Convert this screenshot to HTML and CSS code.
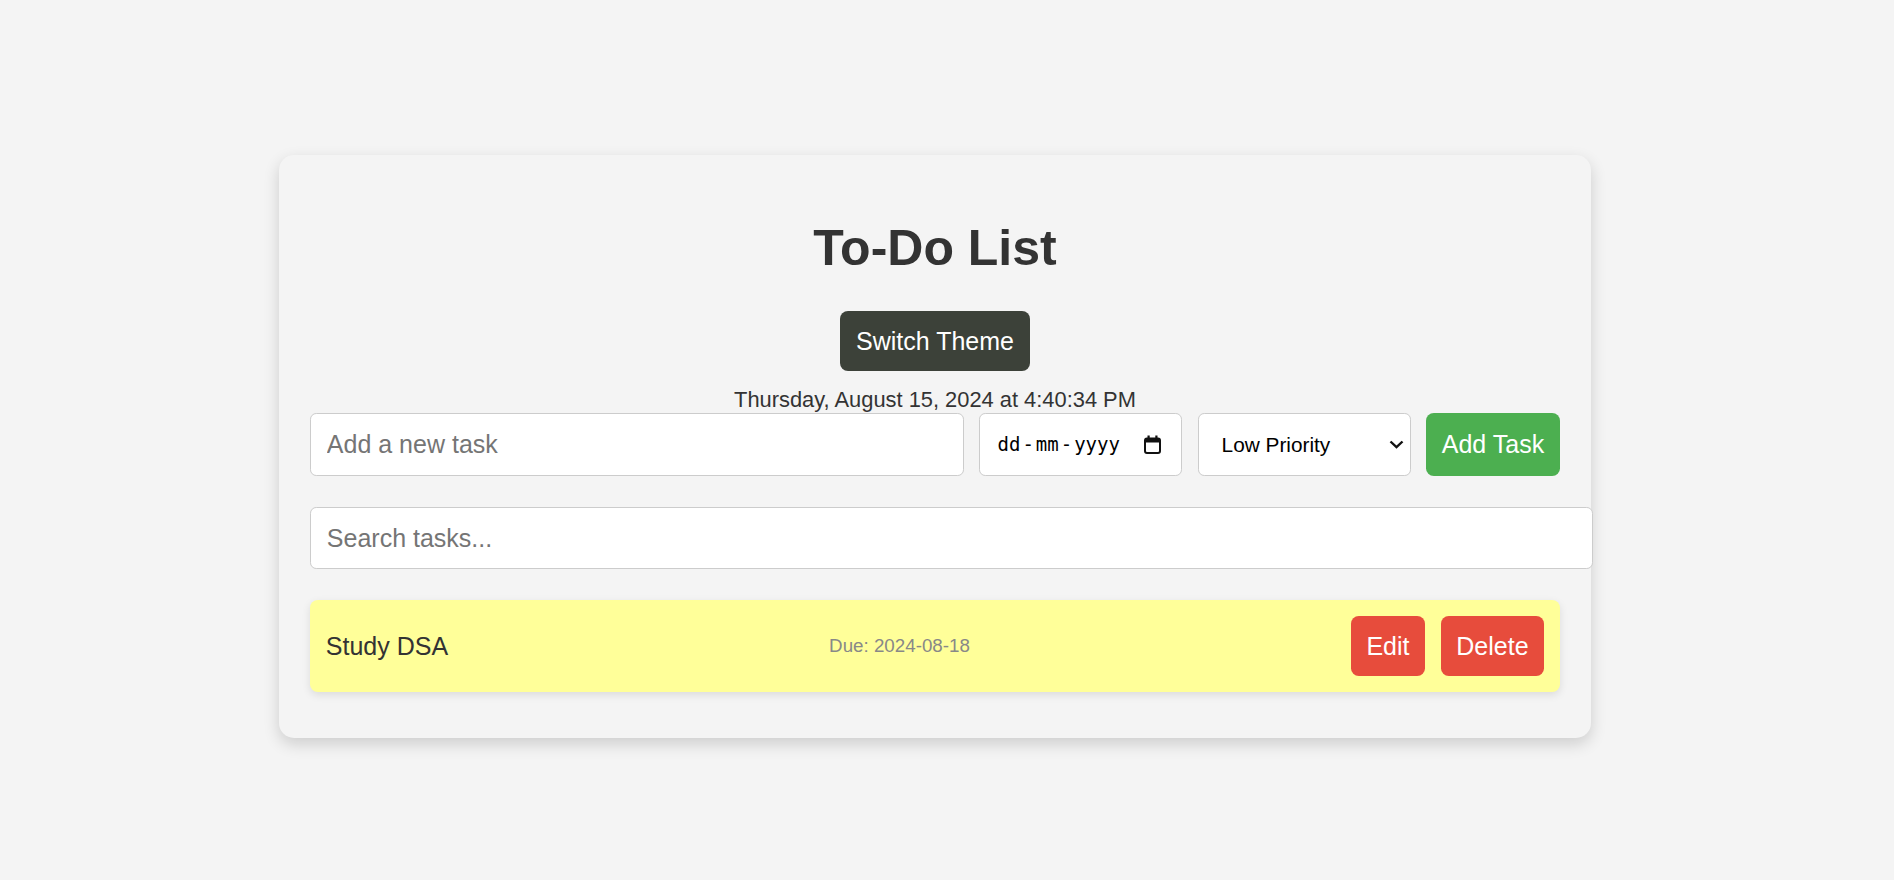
FILE: index.html
```html
<!DOCTYPE html>
<html lang="en">
<head>
<meta charset="utf-8">
<title>To-Do List</title>
<link rel="stylesheet" href="styles.css">
</head>
<body>
<div class="page">
  <div class="container">
    <h1 class="title">To-Do List</h1>
    <div class="theme-row">
      <button class="theme-btn" type="button">Switch Theme</button>
    </div>
    <div class="datetime">Thursday, August 15, 2024 at 4:40:34 PM</div>
    <div class="input-row">
      <input class="field task-input" type="text" placeholder="Add a new task">
      <div class="field date-field">
        <span class="date-text">dd<span class="sep">-</span>mm<span class="sep">-</span>yyyy</span>
        <svg class="cal-icon" width="17" height="19" viewBox="0 0 17 19" aria-hidden="true">
          <rect x="1" y="3.5" width="15" height="14.5" rx="2" fill="none" stroke="#111" stroke-width="2"/>
          <rect x="1" y="3.5" width="15" height="4" fill="#111"/>
          <rect x="3.5" y="0.5" width="2.2" height="4" fill="#111"/>
          <rect x="11.3" y="0.5" width="2.2" height="4" fill="#111"/>
        </svg>
      </div>
      <div class="select-wrap">
        <select class="field priority">
          <option>Low Priority</option>
          <option>Medium Priority</option>
          <option>High Priority</option>
        </select>
        <svg class="chevron" width="15" height="9" viewBox="0 0 15 9" aria-hidden="true">
          <path d="M1.5 1.5 L7.5 7.2 L13.5 1.5" fill="none" stroke="#111" stroke-width="2.4"/>
        </svg>
      </div>
      <button class="add-btn" type="button">Add Task</button>
    </div>
    <input class="field search" type="text" placeholder="Search tasks...">
    <ul class="task-list">
      <li class="task">
        <span class="task-text">Study DSA</span>
        <span class="due">Due: 2024-08-18</span>
        <div class="task-actions">
          <button class="act-btn" type="button">Edit</button>
          <button class="act-btn" type="button">Delete</button>
        </div>
      </li>
    </ul>
  </div>
</div>
</body>
</html>
```

FILE: styles.css
```css
* {
  box-sizing: content-box;
}

html, body {
  margin: 0;
  padding: 0;
  background: #f4f4f4;
  font-family: "Liberation Sans", Arial, sans-serif;
  color: #333;
}

.page {
  display: flex;
  justify-content: center;
  align-items: flex-start;
  padding: 155px 24px 80px 0;
}

.container {
  width: 1249.5px;
  padding: 31.25px;
  background: #f4f4f4;
  border-radius: 15px;
  box-shadow: 0 6px 16px rgba(0, 0, 0, 0.16);
}

.title {
  margin: 34px 0 34px;
  font-size: 50px;
  font-weight: bold;
  text-align: center;
  color: #333;
  line-height: 57px;
}

.theme-row {
  display: flex;
  justify-content: center;
  margin-bottom: 15.6px;
}

.theme-btn {
  background: #3c4139;
  color: #fff;
  border: none;
  border-radius: 8px;
  padding: 15.6px;
  font-family: "Liberation Sans", Arial, sans-serif;
  font-size: 25px;
  line-height: 29px;
}

.datetime {
  text-align: center;
  font-size: 21.875px;
  line-height: 26px;
  color: #333;
}

.input-row {
  display: flex;
  gap: 15.6px;
  align-items: stretch;
  margin-bottom: 31px;
}

.field {
  border: 1px solid #ccc;
  border-radius: 6.25px;
  background: #fff;
  padding: 15.6px;
  font-family: "Liberation Sans", Arial, sans-serif;
  font-size: 25px;
  line-height: 29.5px;
  height: 29.5px;
  color: #333;
  outline: none;
}

.field::placeholder {
  color: #757575;
}

.task-input {
  flex: 1;
  min-width: 0;
}

.date-field {
  width: 164px;
  padding: 15.6px 20px 15.6px 17px;
  display: flex;
  align-items: center;
  justify-content: space-between;
  flex: none;
}

.date-text {
  font-family: "DejaVu Sans Mono", "Liberation Mono", monospace;
  font-size: 19px;
  color: #000;
}

.sep {
  margin: 0 2px;
}

.cal-icon {
  display: block;
}

.select-wrap {
  position: relative;
  flex: none;
}

.priority {
  appearance: none;
  -webkit-appearance: none;
  width: 166px;
  padding: 15.6px 22px 15.6px 22.5px;
  font-size: 20.8px;
  color: #000;
  display: block;
}

.chevron {
  position: absolute;
  right: 7px;
  top: 27px;
  pointer-events: none;
}

.add-btn {
  background: #4caf50;
  color: #fff;
  border: none;
  border-radius: 7.8px;
  padding: 15.6px;
  font-family: "Liberation Sans", Arial, sans-serif;
  font-size: 25px;
  line-height: 31px;
  flex: none;
}

.search {
  display: block;
  width: 100%;
  margin: 0 0 31px;
}

.task-list {
  list-style: none;
  margin: 0;
  padding: 0;
}

.task {
  display: flex;
  justify-content: space-between;
  align-items: center;
  background: #ffff99;
  padding: 15.6px;
  border-radius: 7.8px;
  box-shadow: 0 3px 8px rgba(0, 0, 0, 0.1);
  margin-bottom: 15px;
}

.task-text {
  font-size: 25px;
  color: #333;
}

.due {
  font-size: 18.75px;
  color: #888;
}

.task-actions {
  display: flex;
  gap: 15.6px;
}

.act-btn {
  background: #e74c3c;
  color: #fff;
  border: none;
  border-radius: 7.8px;
  padding: 15.6px;
  font-family: "Liberation Sans", Arial, sans-serif;
  font-size: 25px;
  line-height: 29px;
}
```
